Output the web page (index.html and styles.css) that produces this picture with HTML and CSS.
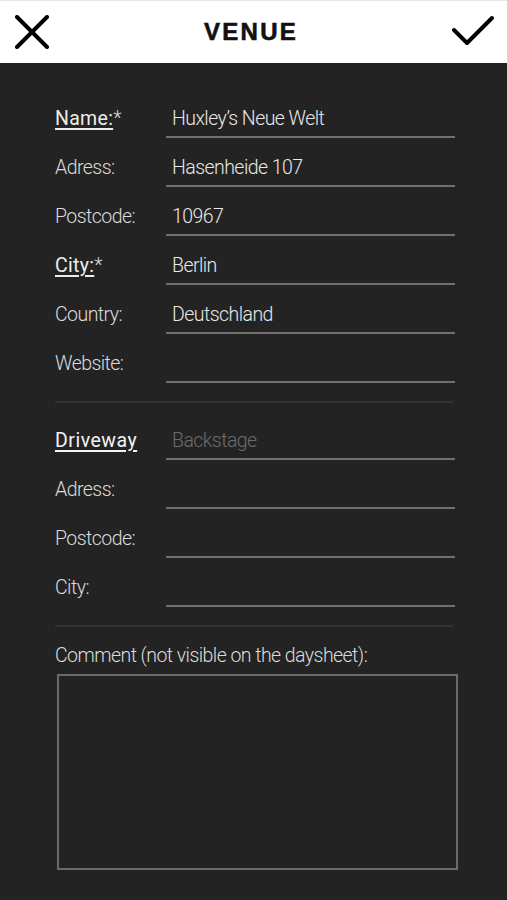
FILE: index.html
```html
<!DOCTYPE html>
<html lang="en">
<head>
    <meta charset="UTF-8">
    <meta name="viewport" content="width=device-width, initial-scale=1.0">
    <title>Venue</title>
    <link rel="stylesheet" href="styles.css">
</head>
<body>

    <header class="topbar">
        <button class="icon-btn" aria-label="Cancel">
            <svg width="34" height="34" viewBox="0 0 34 34">
                <path d="M2 2 L32 32 M32 2 L2 32" stroke="#000" stroke-width="4" stroke-linecap="round" fill="none"/>
            </svg>
        </button>
        <h1>VENUE</h1>
        <button class="icon-btn" aria-label="Save">
            <svg width="44" height="34" viewBox="0 0 44 34">
                <path d="M3 15 L16 28 L41 3" stroke="#000" stroke-width="4" stroke-linecap="round" stroke-linejoin="round" fill="none"/>
            </svg>
        </button>
    </header>

    <form class="form">
        <div class="group">
            <div class="row">
                <label class="label"><u>Name:</u>*</label>
                <div class="field">Huxley’s Neue Welt</div>
            </div>
            <div class="row">
                <label class="label">Adress:</label>
                <div class="field">Hasenheide 107</div>
            </div>
            <div class="row">
                <label class="label">Postcode:</label>
                <div class="field">10967</div>
            </div>
            <div class="row">
                <label class="label"><u>City:</u>*</label>
                <div class="field">Berlin</div>
            </div>
            <div class="row">
                <label class="label">Country:</label>
                <div class="field">Deutschland</div>
            </div>
            <div class="row">
                <label class="label">Website:</label>
                <div class="field"></div>
            </div>
        </div>

        <hr class="divider">

        <div class="group">
            <div class="row">
                <label class="label label-strong"><u>Driveway</u></label>
                <div class="field placeholder">Backstage</div>
            </div>
            <div class="row">
                <label class="label">Adress:</label>
                <div class="field"></div>
            </div>
            <div class="row">
                <label class="label">Postcode:</label>
                <div class="field"></div>
            </div>
            <div class="row">
                <label class="label">City:</label>
                <div class="field"></div>
            </div>
        </div>

        <hr class="divider">

        <div class="comment">
            <label class="comment-label">Comment (not visible on the daysheet):</label>
            <div class="comment-box"></div>
        </div>
    </form>

</body>
</html>
```

FILE: styles.css
```css
/* Page */
body {
    margin: 0;
    padding: 0;
    background-color: #232323;
    font-family: 'Roboto', 'Liberation Sans', sans-serif;
    font-weight: 300;
    color: #e4e4e4;
}

/* Top bar */
.topbar {
    height: 63px;
    background-color: #ffffff;
    border-top: 1px solid #e6e6e6;
    box-sizing: border-box;
    display: flex;
    align-items: center;
    justify-content: space-between;
    padding: 0 12px 0 15px;
}

.topbar h1 {
    margin: 0 0 0 2px;
    font-family: 'Liberation Sans', Arial, sans-serif;
    font-size: 24px;
    font-weight: bold;
    letter-spacing: 2.3px;
    color: #111;
    -webkit-text-stroke: 0.6px #111;
}

.icon-btn {
    background: none;
    border: none;
    padding: 0;
    display: flex;
}

/* Form */
.form {
    padding: 26px 52px 0 55px;
}

.row {
    display: flex;
    align-items: flex-end;
    height: 49px;
}

.label {
    width: 111px;
    flex-shrink: 0;
    font-size: 19.5px;
    line-height: 22px;
    padding-bottom: 8px;
    letter-spacing: -0.55px;
    color: #dcdcdc;
}

.label u {
    font-weight: 400;
    letter-spacing: 0.3px;
    color: #ececec;
    text-decoration-thickness: 2px;
    text-underline-offset: 3px;
}

.label-strong u {
    letter-spacing: 0.5px;
    color: #f4f4f4;
}

.field {
    flex: 1;
    height: 49px;
    box-sizing: border-box;
    border-bottom: 2px solid #707070;
    padding: 0 0 6px 6px;
    display: flex;
    align-items: flex-end;
    font-size: 19.5px;
    line-height: 22px;
    letter-spacing: -0.55px;
    color: #e8e8e8;
}

.placeholder {
    color: #6c6c6c;
}

.divider {
    border: none;
    height: 2px;
    background-color: #313131;
    margin: 18px 2px 8px 0;
}

/* Comment */
.comment {
    padding-top: 10px;
}

.comment-label {
    display: block;
    font-size: 19.5px;
    line-height: 22px;
    letter-spacing: -0.55px;
    color: #dcdcdc;
}

.comment-box {
    margin: 7px -3px 0 2px;
    height: 196px;
    border: 2px solid #6a6a6a;
    box-sizing: border-box;
}
```
